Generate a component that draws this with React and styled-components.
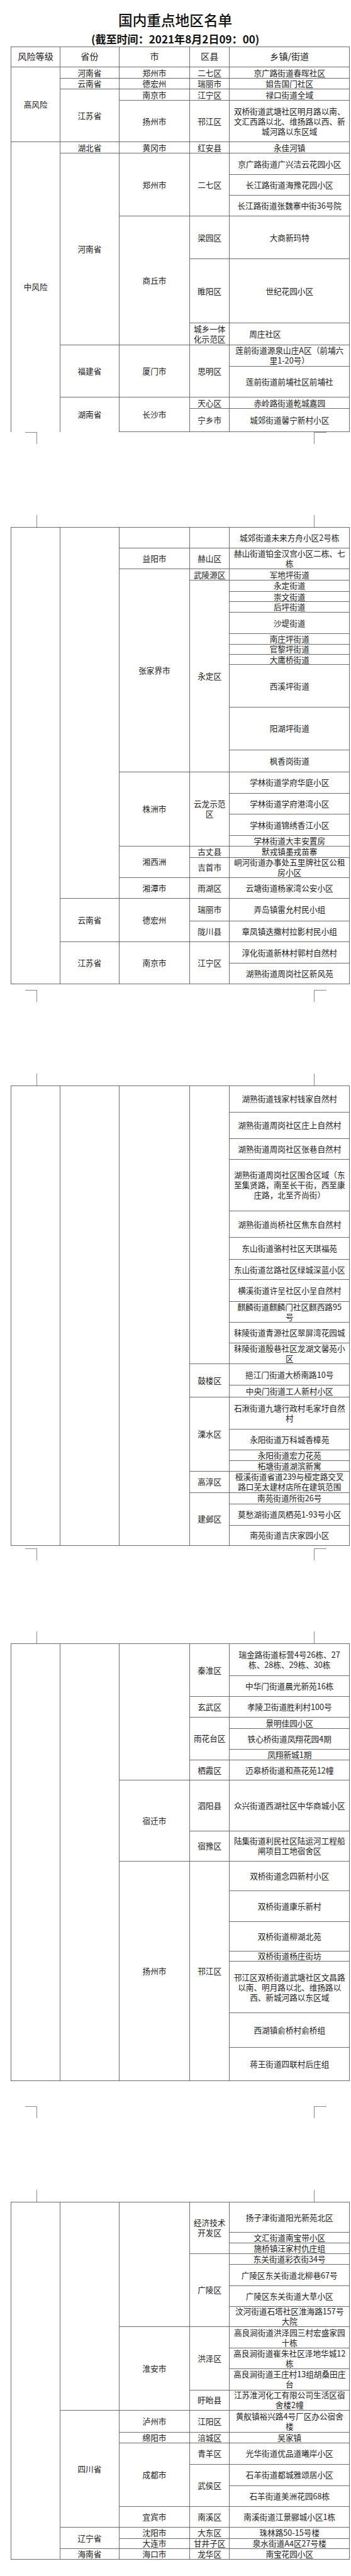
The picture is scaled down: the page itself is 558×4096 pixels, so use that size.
import React from 'react';
import styled, { createGlobalStyle } from 'styled-components';

const K = 0.743;
const u = (n) => `${Math.round(n * K * 1000) / 1000}px`;

const LINE = '#6e6e6e';
const INK = '#222';
const MARK = '#8a8a8a';

const GlobalStyle = createGlobalStyle`
  html, body { margin: 0; padding: 0; background: #fff; }
  body {
    font-family: "Noto Sans CJK SC", "Noto Sans", sans-serif;
    color: ${INK};
  }
`;

const Doc = styled.main`
  width: ${u(750)};
`;

const TitleBlock = styled.header`
  height: ${u(99)};
  display: flex;
  flex-direction: column;
  align-items: center;
`;

const Title = styled.h1`
  margin: ${u(23)} 0 0;
  font-size: ${u(30.5)};
  line-height: ${u(40)};
  font-weight: 500;
  color: #111;
`;

const Subtitle = styled.p`
  margin: ${u(5)} 0 0;
  font-size: ${u(23)};
  line-height: ${u(30)};
  font-weight: 700;
  color: #111;
`;

const Sheet = styled.section`
  height: ${(p) => u(p.$h)};
`;

const Grid = styled.div`
  display: grid;
  box-sizing: border-box;
  margin-left: ${u(23)};
  width: ${u(726)};
  grid-template-columns: ${u(105)} ${u(126)} ${u(151.6)} ${u(84.4)} 1fr;
  grid-template-rows: ${(p) => p.$rows};
  border-top: 1px solid ${LINE};
  border-left: 1px solid ${LINE};
`;

const Cell = styled.div`
  grid-column: ${(p) => p.$col};
  grid-row: ${(p) => p.$row} / span ${(p) => p.$span};
  box-sizing: border-box;
  min-width: 0;
  min-height: 0;
  display: flex;
  align-items: center;
  justify-content: ${(p) => (p.$indent ? 'flex-start' : 'center')};
  padding: 0 ${u(5)} 0 ${(p) => (p.$indent ? u(p.$indent) : u(5))};
  text-align: center;
  white-space: pre-line;
  font-size: ${u(17)};
  line-height: ${u(21.5)};
  color: ${INK};
  border-right: 1px solid ${LINE};
  border-bottom: ${(p) => (p.$open ? 'none' : `1px solid ${LINE}`)};
`;

const HeadCell = styled(Cell)`
  font-size: ${u(19)};
`;

const PageBreak = styled.div`
  height: ${u(204.5)};
  display: flex;
  flex-direction: column;
  justify-content: space-between;
`;

const MarkRow = styled.div`
  height: ${u(26)};
  display: flex;
  justify-content: space-between;
  padding: 0 ${u(52)} 0 ${u(54)};
`;

const Mark = styled.span`
  box-sizing: border-box;
  width: ${(p) => u(p.$w)};
  height: 100%;
  border: 0 solid ${MARK};
  ${(p) => (p.$edge === 'top' ? 'border-top-width: 1px;' : '')}
  ${(p) => (p.$side === 'left' ? 'border-right-width: 1px;' : 'border-left-width: 1px;')}
`;

const L = (t, y, opt = {}) => ({ t, y, ...opt });
const G = (t, c, opt = {}) => ({ t, c, ...opt });

const HEAD = ['风险等级', '省份', '市', '区县', '乡镇/街道'];

const PAGES = [
  {
    header: true,
    top: 143,
    height: 825,
    tree: [
      G('高风险', [
        G('河南省', [G('郑州市', [G('二七区', [L('京广路街道春晖社区', 167)])])]),
        G('云南省', [G('德宏州', [G('瑞丽市', [L('姐告国门社区', 190)])])]),
        G('江苏省', [
          G('南京市', [G('江宁区', [L('禄口街道全域', 214)])]),
          G('扬州市', [
            G('邗江区', [
              L('双桥街道武塘社区明月路以南、\n文汇西路以北、维扬路以西、新\n城河路以东区域', 303),
            ]),
          ]),
        ]),
      ]),
      G(
        '中风险',
        [
          G('湖北省', [G('黄冈市', [G('红安县', [L('永佳河镇', 327)])])]),
          G('河南省', [
            G('郑州市', [
              G('二七区', [
                L('京广路街道广兴洁云花园小区', 373),
                L('长江路街道海豫花园小区', 417),
                L('长江路街道张魏寨中街36号院', 462),
              ]),
            ]),
            G('商丘市', [
              G('梁园区', [L('大商新玛特', 553)]),
              G('睢阳区', [L('世纪花园小区', 691)]),
              G('城乡一体\n化示范区', [L('周庄社区', 738, { indent: 42 })]),
            ]),
          ]),
          G('福建省', [
            G('厦门市', [
              G('思明区', [
                L('莲前街道源泉山庄A区（前埔六\n里1-20号）', 783),
                L('莲前街道前埔社区前埔社', 849),
              ]),
            ]),
          ]),
          G(
            '湖南省',
            [
              G('长沙市', [
                G('天心区', [L('赤岭路街道乾城嘉园', 874)]),
                G('宁乡市', [L('城郊街道馨宁新村小区', 923)]),
              ]),
            ],
            { open: true }
          ),
        ],
        { open: true }
      ),
    ],
  },
  {
    top: 1128.5,
    height: 990,
    tree: [
      G('', [
        G('', [
          G('', [G('', [L('城郊街道未来方舟小区2号栋', 1172)])]),
          G('益阳市', [G('赫山区', [L('赫山街道铂金汉宫小区二栋、七\n栋', 1217)])]),
          G('张家界市', [
            G('武陵源区', [L('军地坪街道', 1241)]),
            G('永定区', [
              L('永定街道', 1265),
              L('崇文街道', 1287),
              L('后坪街道', 1309),
              L('沙堤街道', 1356),
              L('南庄坪街道', 1378),
              L('官黎坪街道', 1400),
              L('大庸桥街道', 1422),
              L('西溪坪街道', 1513),
              L('阳湖坪街道', 1604),
              L('枫香岗街道', 1651),
            ]),
          ]),
          G('株洲市', [
            G('云龙示范\n区', [
              L('学林街道学府华庭小区', 1697),
              L('学林街道学府港湾小区', 1742),
              L('学林街道锦绣香江小区', 1788),
              L('学林街道大丰安置房', 1810),
            ]),
          ]),
          G('湘西洲', [
            G('古丈县', [L('默戎镇墨戎苗寨', 1834)]),
            G('吉首市', [L('峒河街道办事处五里牌社区公租\n房小区', 1878)]),
          ]),
          G('湘潭市', [G('雨湖区', [L('云塘街道杨家湾公安小区', 1922)])]),
        ]),
        G('云南省', [
          G('德宏州', [
            G('瑞丽市', [L('弄岛镇雷允村民小组', 1970)]),
            G('陇川县', [L('章凤镇迭撒村拉影村民小组', 2015)]),
          ]),
        ]),
        G('江苏省', [
          G('南京市', [
            G('江宁区', [L('淳化街道新林村郭村自然村', 2061), L('湖熟街道周岗社区新风苑', 2105)]),
          ]),
        ]),
      ]),
    ],
  },
  {
    top: 2323,
    height: 990,
    tree: [
      G('', [
        G('', [
          G('', [
            G('', [
              L('湖熟街道钱家村钱家自然村', 2379),
              L('湖熟街道周岗社区庄上自然村', 2436),
              L('湖熟街道周岗社区张巷自然村', 2480),
              L('湖熟街道周岗社区围合区域（东\n至集贤路，南至长干街，西至康\n庄路，北至齐尚街）', 2591),
              L('湖熟街道尚桥社区焦东自然村', 2648),
              L('东山街道骆村社区天琪福苑', 2695),
              L('东山街道岔路社区绿城深蓝小区', 2738),
              L('横溪街道许呈社区小呈自然村', 2785),
              L('麒麟街道麒麟门社区麒西路95\n号', 2829),
              L('秣陵街道青源社区翠屏湾花园城', 2873),
              L('秣陵街道殷巷社区龙湖文馨苑小\n区', 2918),
            ]),
            G('鼓楼区', [L('挹江门街道大桥南路10号', 2964), L('中央门街道工人新村小区', 2989)]),
            G('溧水区', [
              L('石湫街道九塘行政村毛家圩自然\n村', 3058),
              L('永阳街道万科城香樟苑', 3103),
              L('永阳街道宏力花苑', 3125),
              L('柘塘街道湖滨新寓', 3148),
            ]),
            G('高淳区', [L('桠溪街道省道239与桠定路交叉\n路口芜太建材店所在建筑范围', 3194)]),
            G('建邺区', [
              L('南苑街道所街26号', 3218),
              L('莫愁湖街道凤栖苑1-93号小区', 3264),
              L('南苑街道吉庆家园小区', 3307),
            ]),
          ]),
        ]),
      ]),
    ],
  },
  {
    top: 3518,
    height: 990,
    tree: [
      G('', [
        G('', [
          G('', [
            G('秦淮区', [
              L('瑞金路街道标营4号26栋、27\n栋、28栋、29栋、30栋', 3586),
              L('中华门街道晨光新苑16栋', 3631),
            ]),
            G('玄武区', [L('孝陵卫街道胜利村100号', 3675)]),
            G('雨花台区', [
              L('景明佳园小区', 3699),
              L('铁心桥街道凤翔花园4期', 3743),
              L('凤翔新城1期', 3766),
            ]),
            G('栖霞区', [L('迈皋桥街道和燕花苑12幢', 3810)]),
          ]),
          G('宿迁市', [
            G('泗阳县', [L('众兴街道西湖社区中华商城小区', 3918)]),
            G('宿豫区', [L('陆集街道利民社区陆运河工程船\n闸项目工地宿舍区', 3983)]),
          ]),
          G('扬州市', [
            G('邗江区', [
              L('双桥街道念四新村小区', 4047),
              L('双桥街道康乐新村', 4112),
              L('双桥街道柳湖北苑', 4175),
              L('双桥街道杨庄街坊', 4197),
              L('邗江区双桥街道武塘社区文昌路\n以南、明月路以北、维扬路以\n西、新城河路以东区域', 4308),
              L('西湖镇俞桥村俞桥组', 4381),
              L('蒋王街道四联村后庄组', 4453),
            ]),
          ]),
        ]),
      ]),
    ],
  },
  {
    top: 4712,
    height: 796,
    tree: [
      G('', [
        G('', [
          G('', [
            G('经济技术\n开发区', [
              L('扬子津街道阳光新苑北区', 4777),
              L('文汇街道南宝带小区', 4799),
              L('施桥镇汪家村仇庄组', 4822),
            ]),
            G('广陵区', [
              L('东关街道彩衣街34号', 4846),
              L('广陵区东关街道北柳巷67号', 4891),
              L('广陵区东关街道大草小区', 4935),
              L('汶河街道石塔社区淮海路157号\n大院', 4979),
            ]),
          ]),
          G('淮安市', [
            G('洪泽区', [
              L('高良涧街道洪泽园三村宏盛家园\n十栋', 5025),
              L('高良涧街道崔朱社区泽地华城12\n栋', 5069),
              L('高良涧街道王庄村13组胡桑田庄\n台', 5114),
            ]),
            G('盱眙县', [L('江苏淮河化工有限公司生活区宿\n舍楼2幢', 5158)]),
          ]),
        ]),
        G('四川省', [
          G('泸州市', [G('江阳区', [L('黄舣镇裕兴路4号厂区办公宿舍\n楼', 5205)])]),
          G('绵阳市', [G('涪城区', [L('吴家镇', 5227)])]),
          G('成都市', [
            G('青羊区', [L('光华街道优品道曦岸小区', 5273)]),
            G('武侯区', [L('石羊街道都城雅颂居小区', 5319), L('石羊街道美洲花园68栋', 5364)]),
          ]),
          G('宜宾市', [G('南溪区', [L('南溪街道江景郦城小区1栋', 5408)])]),
        ]),
        G('辽宁省', [
          G('沈阳市', [G('大东区', [L('珠林路50-15号楼', 5432)])]),
          G('大连市', [G('甘井子区', [L('泉水街道A4区27号楼', 5454)])]),
        ]),
        G('海南省', [G('海口市', [G('龙华区', [L('南宝花园小区', 5477)])])]),
      ]),
    ],
  },
];

function layout(tree, startRow, top) {
  const cells = [];
  const heights = [];
  let prevY = top;
  const walk = (nodes, depth, row) => {
    let r = row;
    nodes.forEach((n) => {
      if (depth === 5) {
        heights.push(n.y - prevY);
        prevY = n.y;
        cells.push({ col: 5, row: r, span: 1, t: n.t, indent: n.indent, open: n.open });
        r += 1;
      } else {
        const s = r;
        r = walk(n.c, depth + 1, r);
        cells.push({ col: depth, row: s, span: r - s, t: n.t, open: n.open });
      }
    });
    return r;
  };
  walk(tree, 1, startRow);
  return { cells, heights };
}

function TablePage({ page }) {
  const { cells, heights } = layout(page.tree, page.header ? 2 : 1, page.top);
  const rows = [...(page.header ? [44] : []), ...heights].map(u).join(' ');
  return (
    <Sheet $h={page.height}>
      <Grid $rows={rows}>
        {page.header &&
          HEAD.map((h, i) => (
            <HeadCell key={h} $col={i + 1} $row={1} $span={1}>
              {h}
            </HeadCell>
          ))}
        {cells.map((c, i) => (
          <Cell
            key={i}
            $col={c.col}
            $row={c.row}
            $span={c.span}
            $open={c.open}
            $indent={c.indent}
          >
            {c.t}
          </Cell>
        ))}
      </Grid>
    </Sheet>
  );
}

function Break() {
  return (
    <PageBreak>
      <MarkRow>
        <Mark $w={26} $side="left" $edge="top" />
        <Mark $w={27} $side="right" $edge="top" />
      </MarkRow>
      <MarkRow>
        <Mark $w={26} $side="left" />
        <Mark $w={27} $side="right" />
      </MarkRow>
    </PageBreak>
  );
}

export default function App() {
  return (
    <Doc>
      <GlobalStyle />
      <TitleBlock>
        <Title>国内重点地区名单</Title>
        <Subtitle>(截至时间：2021年8月2日09：00)</Subtitle>
      </TitleBlock>
      {PAGES.map((p, i) => (
        <React.Fragment key={i}>
          {i > 0 && <Break />}
          <TablePage page={p} />
        </React.Fragment>
      ))}
    </Doc>
  );
}
